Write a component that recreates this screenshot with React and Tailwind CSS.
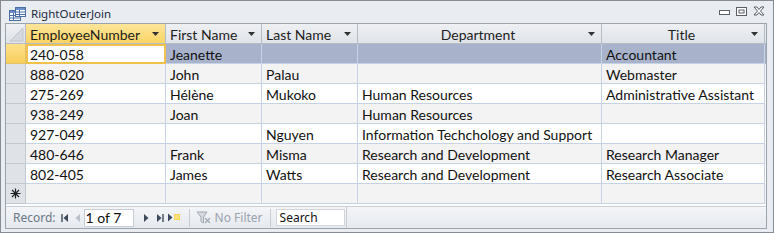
import React from "react";

const COLS = [140, 96, 96, 244, 163];

const HEADERS = [
  { label: "EmployeeNumber", align: "left" },
  { label: "First Name", align: "left" },
  { label: "Last Name", align: "left" },
  { label: "Department", align: "center" },
  { label: "Title", align: "center" },
];

const ROWS = [
  ["240-058", "Jeanette", "", "", "Accountant"],
  ["888-020", "John", "Palau", "", "Webmaster"],
  ["275-269", "Hélène", "Mukoko", "Human Resources", "Administrative Assistant"],
  ["938-249", "Joan", "", "Human Resources", ""],
  ["927-049", "", "Nguyen", "Information Techchology and Support", ""],
  ["480-646", "Frank", "Misma", "Research and Development", "Research Manager"],
  ["802-405", "James", "Watts", "Research and Development", "Research Associate"],
];

const font = { fontFamily: "Lato, 'Open Sans', sans-serif" };

function DropArrow() {
  return (
    <svg width="7" height="4" viewBox="0 0 7 4" className="shrink-0">
      <path d="M0 0h7L3.5 4z" fill="#333" />
    </svg>
  );
}

function DatasheetIcon() {
  return (
    <svg width="17" height="14" viewBox="0 0 17 14">
      <rect x="0.5" y="3.5" width="11" height="10" fill="#fff" stroke="#4a6fa5" />
      <rect x="1" y="4" width="10" height="2" fill="#6d8fc7" />
      <path d="M1 8.5h10M1 11h10M4.5 6v7" stroke="#4a6fa5" />
      <rect x="6.5" y="0.5" width="10" height="9" fill="#fff" stroke="#4a6fa5" />
      <rect x="7" y="1" width="9" height="2" fill="#6d8fc7" />
      <path d="M7 5h9M7 7.5h9M10.5 3v6" stroke="#4a6fa5" />
    </svg>
  );
}

function WindowButtons() {
  return (
    <div className="flex items-center gap-[6px] pr-[8px] pt-[5px]">
      <svg width="11" height="8" viewBox="0 0 11 8">
        <rect x="0.5" y="3.5" width="10" height="4" fill="#fff" stroke="#5b5f66" />
      </svg>
      <svg width="11" height="9" viewBox="0 0 11 9">
        <rect x="0.5" y="0.5" width="10" height="8" fill="#fff" stroke="#5b5f66" />
        <rect x="3" y="3" width="5" height="3" fill="none" stroke="#5b5f66" />
      </svg>
      <svg width="12" height="10" viewBox="0 0 12 10">
        <path
          d="M1 1h3l2 2.5L8 1h3L7.5 5 11 9H8L6 6.5 4 9H1l3.5-4z"
          fill="#fff"
          stroke="#5b5f66"
          strokeLinejoin="round"
        />
      </svg>
    </div>
  );
}

function HeaderRow() {
  return (
    <div className="flex h-[20px] border-b border-[#b5bcc6] bg-gradient-to-b from-[#eef0f3] to-[#dfe3e8]">
      {/* corner */}
      <div className="w-[20px] shrink-0 border-r border-[#b5bcc6] relative overflow-hidden">
        <svg width="20" height="20" viewBox="0 0 20 20" className="absolute inset-0">
          <path d="M17 4V17H4z" fill="#d6dae0" stroke="#c2c7ce" />
        </svg>
      </div>
      {HEADERS.map((h, i) => (
        <div
          key={h.label}
          style={{ width: COLS[i], ...font }}
          className={`shrink-0 flex items-center border-r border-[#b5bcc6] pr-[6px] text-[14px] text-[#1e1e1e] ${
            i === 0 ? "bg-gradient-to-b from-[#fde59a] to-[#fbd462]" : ""
          }`}
        >
          <span
            className={`flex-1 whitespace-nowrap leading-[19px] pt-[2px] ${
              h.align === "center" ? "text-center pl-[10px]" : "pl-[4px]"
            }`}
          >
            {h.label}
          </span>
          <DropArrow />
        </div>
      ))}
    </div>
  );
}

function DataRow({ row, index }) {
  const current = index === 0;
  const bg = current ? "bg-[#a8b3cb]" : index % 2 === 1 ? "bg-[#f3f3f4]" : "bg-white";
  return (
    <div className={`flex h-[20px] ${bg}`}>
      <div
        className={`w-[20px] shrink-0 border-r border-b ${
          current
            ? "bg-gradient-to-b from-[#fde08a] to-[#f8cf5c] border-[#e4c26a]"
            : "bg-[#dfe3e8] border-[#c2c8d2]"
        }`}
      />
      {row.map((v, i) => (
        <div
          key={i}
          style={{ width: COLS[i], ...font }}
          className={`shrink-0 text-[14px] text-[#111] whitespace-nowrap overflow-hidden ${
            current && i === 0
              ? "bg-white border-2 border-[#f0c24c] pl-[2px] leading-[16px] pt-[1px]"
              : "border-r border-b border-[#c6d2e6] pl-[4px] leading-[19px] pt-[1px]"
          }`}
        >
          {v}
        </div>
      ))}
    </div>
  );
}

function NewRow() {
  return (
    <div className="flex h-[20px] bg-[#f3f3f4]">
      <div className="w-[20px] shrink-0 border-r border-b border-[#c2c8d2] bg-[#dfe3e8] flex items-center justify-center">
        <svg width="11" height="11" viewBox="0 0 11 11">
          <path d="M5.5 0.5v10M0.5 5.5h10M2 2l7 7M9 2l-7 7" stroke="#222" strokeWidth="1.2" />
        </svg>
      </div>
      {COLS.map((w, i) => (
        <div key={i} style={{ width: w }} className="shrink-0 border-r border-b border-[#c6d2e6]" />
      ))}
    </div>
  );
}

function NavBar() {
  const nav = { fontFamily: "'Noto Sans', 'Open Sans', sans-serif" };
  return (
    <div
      style={nav}
      className="h-[22px] flex items-center bg-gradient-to-b from-[#f3f5f8] to-[#e6e9ee] border-t border-[#c8cdd4] text-[12px] text-[#6b7786]"
    >
      <span className="pl-[7px] pr-[5px]">Record:</span>
      {/* first */}
      <svg width="8" height="8" viewBox="0 0 8 8">
        <path d="M1 0v8" stroke="#3d4a5c" strokeWidth="1.4" />
        <path d="M7 0v8L2.5 4z" fill="#3d4a5c" />
      </svg>
      {/* prev */}
      <svg width="6" height="8" viewBox="0 0 6 8" className="ml-[6px]">
        <path d="M5 0v8L0.5 4z" fill="#b9c0ca" />
      </svg>
      <div
        className="ml-[3px] w-[50px] h-[18px] bg-white border border-[#c9ced6] flex items-center pl-[1px] text-[14px] text-[#111]"
        style={font}
      >
        1 of 7
      </div>
      {/* next */}
      <svg width="6" height="8" viewBox="0 0 6 8" className="ml-[9px]">
        <path d="M1 0v8L5.5 4z" fill="#3d4a5c" />
      </svg>
      {/* last */}
      <svg width="8" height="8" viewBox="0 0 8 8" className="ml-[7px]">
        <path d="M1 0v8L5.5 4z" fill="#3d4a5c" />
        <path d="M7 0v8" stroke="#3d4a5c" strokeWidth="1.4" />
      </svg>
      {/* new */}
      <svg width="14" height="9" viewBox="0 0 14 9" className="ml-[3px]">
        <path d="M1 0.5v8L5.5 4.5z" fill="#3d4a5c" />
        <rect x="7" y="1" width="6" height="6" fill="#f6c638" />
        <path d="M7 3h6M7 5h6M9 1v6M11 1v6" stroke="#fff3b0" strokeWidth="0.7" />
      </svg>
      <div className="ml-[8px] w-px h-[18px] bg-[#c8cdd4]" />
      {/* filter */}
      <svg width="16" height="14" viewBox="0 0 16 14" className="ml-[6px]">
        <path d="M1 1h10L7.5 6v6L5 10.5V6z" fill="#d7dbe1" stroke="#a3aab4" />
        <path d="M9 7l5 5M14 7l-5 5" stroke="#a3aab4" strokeWidth="1.3" />
      </svg>
      <span className="ml-[3px] text-[#9aa3ae]">No Filter</span>
      <div className="ml-[7px] w-px h-[18px] bg-[#c8cdd4]" />
      <div className="ml-[5px] w-[69px] h-[17px] bg-white border border-[#d2d6dc] flex items-center pl-[3px] text-[#111]">
        Search
      </div>
      <div className="flex-1 ml-[1px] h-full border-l border-[#c8cdd4]" />
    </div>
  );
}

export default function App() {
  return (
    <div className="w-[774px] h-[233px] bg-[#e9ecf0] border border-[#868c94] flex flex-col overflow-hidden">
      {/* Title bar */}
      <div className="h-[22px] flex items-start justify-between shrink-0">
        <div className="flex items-center pl-[8px] pt-[6px] gap-[5px]">
          <DatasheetIcon />
          <span
            className="text-[11.5px] text-[#1a2a40] leading-none"
            style={{ fontFamily: "'Noto Sans', 'Open Sans', sans-serif" }}
          >
            RightOuterJoin
          </span>
        </div>
        <WindowButtons />
      </div>

      {/* Datasheet */}
      <div className="ml-[4px] mr-[6px] border border-[#9ba3ad] bg-[#f3f3f4] flex flex-col">
        <div className="h-[182px] bg-white">
          <HeaderRow />
          {ROWS.map((r, i) => (
            <DataRow key={r[0]} row={r} index={i} />
          ))}
          <NewRow />
        </div>
        <NavBar />
      </div>
    </div>
  );
}
